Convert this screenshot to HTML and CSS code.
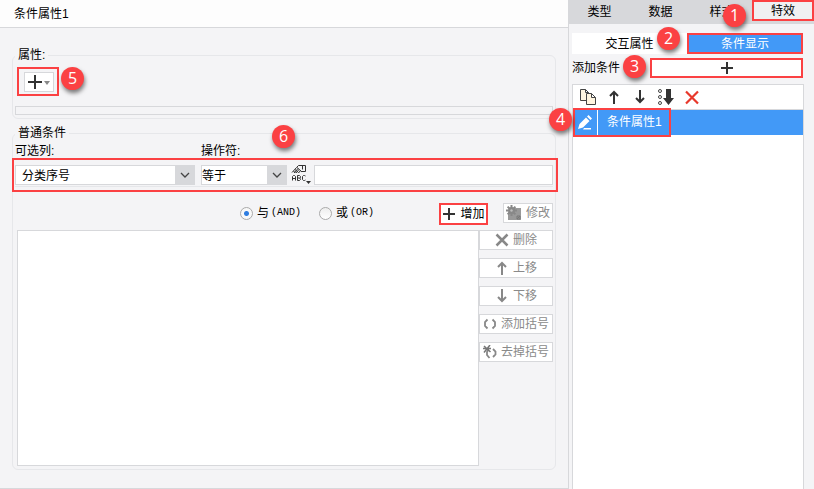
FILE: index.html
```html
<!DOCTYPE html>
<html lang="zh-CN">
<head>
<meta charset="utf-8">
<title>条件属性</title>
<link rel="stylesheet" href="styles.css">
</head>
<body>
<div class="app">
  <section class="editor">
    <header class="editor-header">条件属性1</header>
    <div class="editor-body">
      <fieldset class="group">
        <legend>属性:</legend>
        <div class="attr-actions">
          <div class="mark attr-mark">
            <button class="btn drop-btn" type="button" aria-label="添加属性">
              <svg width="24" height="16" viewBox="0 0 24 16"><path d="M1 7h14v2H1zM7 1h2v14H7z" fill="#333"/><path d="M17 7h6l-3 4z" fill="#888"/></svg>
            </button>
            <span class="badge badge-5">5</span>
          </div>
        </div>
        <div class="attr-bar"></div>
      </fieldset>

      <fieldset class="group group-main">
        <legend>普通条件</legend>
        <div class="labels">
          <label class="label-col" for="column">可选列:</label>
          <label for="operator">操作符:</label>
        </div>
        <div class="filter">
          <div class="select select-col">
            <select id="column"><option>分类序号</option></select>
            <span class="arrow"><svg width="10" height="6" viewBox="0 0 10 6"><path d="M1 1l4 4 4-4" fill="none" stroke="#444" stroke-width="1.3"/></svg></span>
          </div>
          <div class="select select-op">
            <select id="operator"><option>等于</option></select>
            <span class="arrow"><svg width="10" height="6" viewBox="0 0 10 6"><path d="M1 1l4 4 4-4" fill="none" stroke="#444" stroke-width="1.3"/></svg></span>
          </div>
          <button class="icon-btn type-btn" type="button" aria-label="值类型">
            <svg width="20" height="20" viewBox="0 0 20 20" fill="none" stroke="#333">
              <path d="M5.500 2.500l2-2h7v6h-4M11.500.500v4M1 7.500l4.500-5M3 8l4-4.500M5 8l3-3.500M7.500 8l2-2.500M6 2.500l5 4.500M4 4.500l3.500 3M2.500 6l2 2"/>
              <path d="M1.500 15.500v-4l1-1h1l1 1v4M1.500 13.500h3M6.500 10.500h2l1 1v1l-1 .5h-2M8.500 13l1 1v.5l-1 1h-2v-5M14.500 11l-1-.5h-1l-1 1v3l1 1h1l1-.5"/>
              <path d="M15 16h5l-2.500 3z" fill="#333" stroke="none"/>
            </svg>
          </button>
          <input class="value" type="text" aria-label="值">
          <span class="badge badge-6">6</span>
        </div>
        <div class="controls">
          <div class="radios">
            <label class="radio"><input type="radio" name="logic" checked><span>与</span><span class="code">(AND)</span></label>
            <label class="radio"><input type="radio" name="logic"><span>或</span><span class="code">(OR)</span></label>
          </div>
          <div class="mark add-mark">
            <button class="btn add-btn" type="button">
              <svg width="14" height="14" viewBox="0 0 14 14"><path d="M1 6h12v2H1zM6 1h2v12H6z" fill="#333"/></svg>增加
            </button>
          </div>
          <button class="btn edit-btn" type="button" disabled>
            <svg width="16" height="16" viewBox="0 0 16 16"><path d="M8 3h7v12H2V9z" fill="#999"/><path d="M5.500 0v11M0 5.500h11M1.600 1.600l7.800 7.800M9.400 1.600L1.600 9.400" stroke="#888" stroke-width="2"/><circle cx="5.500" cy="5.500" r="3.500" fill="#888"/><circle cx="5.500" cy="5.500" r="1.200" fill="#bbb"/><path d="M11 11h3v3h-3zM11 14l3-3" fill="none" stroke="#777"/></svg>修改
          </button>
        </div>
        <div class="work">
          <div class="expression"></div>
          <div class="side">
            <button class="btn" type="button" disabled><svg width="14" height="14" viewBox="0 0 14 14"><path d="M1.500 1.500L12.500 12.500M12.500 1.500L1.500 12.500" stroke="#888" stroke-width="2.500"/></svg>删除</button>
            <button class="btn" type="button" disabled><svg width="14" height="14" viewBox="0 0 14 14"><path d="M7 14V2M3 6l4-4 4 4" fill="none" stroke="#888" stroke-width="2"/></svg>上移</button>
            <button class="btn" type="button" disabled><svg width="14" height="14" viewBox="0 0 14 14"><path d="M7 0v12M3 8l4 4 4-4" fill="none" stroke="#888" stroke-width="2"/></svg>下移</button>
            <button class="btn" type="button" disabled><svg width="14" height="14" viewBox="0 0 14 14"><path d="M4.500 2.500L2 5v4l2.500 2.500M9.500 2.500L12 5v4l-2.500 2.500" fill="none" stroke="#888" stroke-width="1.800"/></svg>添加括号</button>
            <button class="btn" type="button" disabled><svg width="14" height="14" viewBox="0 0 14 14"><path d="M5.500 4L4 7v3l2.500 3M10 4l2.500 2.500v3L10 12" fill="none" stroke="#888" stroke-width="1.800"/><path d="M0 3.500h8M1 1l6.500 6M7 0L1 7.500" stroke="#777" stroke-width="1.500"/></svg>去掉括号</button>
          </div>
        </div>
      </fieldset>
    </div>
  </section>

  <aside class="panel">
    <nav class="tabs">
      <button class="tab" type="button">类型</button>
      <button class="tab" type="button">数据</button>
      <button class="tab" type="button">样式</button>
      <button class="tab tab-active" type="button">特效</button>
      <span class="badge badge-1">1</span>
    </nav>
    <div class="panel-body">
      <div class="modes">
        <button class="mode" type="button">交互属性</button>
        <button class="mode mode-active mark" type="button">条件显示</button>
        <span class="badge badge-2">2</span>
      </div>
      <div class="add-row">
        <label for="add-condition">添加条件</label>
        <button class="add-condition mark" id="add-condition" type="button" aria-label="添加条件">
          <svg width="14" height="14" viewBox="0 0 14 14"><path d="M1 6h12v2H1zM6 1h2v12H6z" fill="#333"/></svg>
        </button>
        <span class="badge badge-3">3</span>
      </div>
      <div class="conditions">
        <div class="toolbar">
          <button class="icon-btn" type="button" aria-label="复制"><svg width="16" height="16" viewBox="0 0 16 16" fill="#fff5e0" stroke="#444"><path d="M.5.500h5l3 3v8h-8zM5.500.500v3h3"/><path d="M6.500 4.500h5l4 4v7h-9zM11.500 4.500v4h4"/></svg></button>
          <button class="icon-btn" type="button" aria-label="上移"><svg width="16" height="16" viewBox="0 0 16 16"><path d="M8 15V3M4 7l4-4 4 4" fill="none" stroke="#333" stroke-width="2"/></svg></button>
          <button class="icon-btn" type="button" aria-label="下移"><svg width="16" height="16" viewBox="0 0 16 16"><path d="M8 1v12M4 9l4 4 4-4" fill="none" stroke="#333" stroke-width="2"/></svg></button>
          <button class="icon-btn" type="button" aria-label="置底"><svg width="16" height="16" viewBox="0 0 16 16"><g fill="none" stroke="#444"><circle cx="2" cy="2" r="1.500"/><circle cx="2" cy="8" r="1.500"/><circle cx="2" cy="14" r="1.500"/></g><path d="M8 0h5v9h3l-5.500 7L5 9h3z" fill="#333"/></svg></button>
          <button class="icon-btn" type="button" aria-label="删除"><svg width="16" height="16" viewBox="0 0 16 16"><path d="M2 2.500l12 12M14 2.500l-12 12" stroke="#e8382b" stroke-width="2.200"/></svg></button>
        </div>
        <div class="item">
          <span class="item-icon"><svg width="16" height="16" viewBox="0 0 16 16" fill="#fff"><path d="M1 14l1.500-5L9 2.500l3.500 3.500L6 12.500zM10 1.500L11.500 0 15 3.500 13.500 5zM7 13h7v1.500H6z"/></svg></span>
          <span class="item-name">条件属性1</span>
          <span class="item-mark"></span>
          <span class="badge badge-4">4</span>
        </div>
      </div>
    </div>
  </aside>
</div>
</body>
</html>
```
FILE: styles.css
```css
:root {
  --line: #d7d8db;
  --soft-line: #e6e7ea;
  --bg: #f4f4f6;
  --blue: #4299f7;
  --red: #fb4143;
}

* { box-sizing: border-box; }

body {
  margin: 0;
  background: var(--bg);
  color: #000;
  font: 12px/16px "Liberation Sans", "Noto Sans CJK SC", sans-serif;
}

button, input, select {
  font: inherit;
  color: inherit;
  margin: 0;
  border-radius: 0;
}

button { padding: 0; }

svg { display: block; flex: none; }

.app {
  display: flex;
  min-height: 100vh;
}

/* Numbered callouts and highlight frames */
.badge {
  position: absolute;
  z-index: 2;
  width: 23px;
  height: 23px;
  border-radius: 50%;
  background: var(--red);
  color: #fff;
  font: 16px/23px "Open Sans", sans-serif;
  text-align: center;
  box-shadow: 1px 3px 4px rgba(0, 0, 0, 0.5);
}

.badge-1 { left: 154px; top: 4px; }
.badge-2 { left: 85px; top: -6px; }
.badge-3 { left: 51px; top: -3px; }
.badge-4 { left: -24px; top: -2px; }
.badge-5 { left: 42px; top: -2px; }
.badge-6 { left: 257px; top: -33px; }

.mark {
  position: relative;
  border: 2px solid var(--red);
}

/* Left editor */
.editor {
  flex: 1;
  min-width: 0;
  display: flex;
  flex-direction: column;
  border-right: 1px solid var(--line);
  border-bottom: 1px solid var(--line);
}

.editor-header {
  padding: 6px 14px 5px;
  background: #fdfdfd;
  border-bottom: 1px solid var(--line);
}

.editor-body {
  flex: 1;
  display: flex;
  flex-direction: column;
  gap: 6px;
  padding: 19px 12px 18px;
}

.group {
  min-width: 0;
  margin: 0;
  padding: 0 2px 3px;
  border: 1px solid var(--soft-line);
  border-radius: 6px;
}

.group-main {
  flex: 1;
  display: flex;
  flex-direction: column;
}

legend { padding: 1px 3px 0; line-height: 15px; }

.attr-actions {
  display: flex;
  padding: 4px 2px 10px;
}

.attr-mark { padding: 3px 3px 2px 5px; }

.attr-bar {
  height: 9px;
  border: 1px solid var(--line);
}

.btn {
  display: flex;
  align-items: center;
  justify-content: center;
  height: 20px;
  border: 1px solid var(--line);
  background: #fff;
}

.btn:disabled { color: #8a8a8a; }

.drop-btn { width: 30px; height: 20px; }

.labels {
  display: flex;
  padding-top: 3px;
  line-height: 14px;
}

.label-col { width: 186px; }

.filter {
  position: relative;
  display: flex;
  padding: 7px 0 1px;
  border-bottom: 1px solid var(--soft-line);
}

.filter::after {
  content: "";
  position: absolute;
  inset: 0 -5px -6px -3px;
  border: 2px solid var(--red);
  pointer-events: none;
}

.select {
  position: relative;
  height: 20px;
}

.select-col { width: 180px; margin-right: 6px; }
.select-op { width: 86px; margin-right: 4px; }

.select select {
  appearance: none;
  width: 100%;
  height: 100%;
  padding: 1px 20px 0 0;
  border: 1px solid var(--line);
  background: #fff;
}

.select-col select { padding-left: 6px; }

.arrow {
  position: absolute;
  inset: 0 0 0 auto;
  width: 20px;
  display: grid;
  place-items: center;
  background: var(--line);
  pointer-events: none;
}

.icon-btn {
  border: 0;
  background: none;
}

.type-btn { margin-right: 3px; }

.value {
  flex: 1;
  min-width: 0;
  height: 20px;
  border: 1px solid var(--line);
  background: #fff;
}

.controls {
  display: flex;
  justify-content: flex-end;
  align-items: flex-start;
  height: 23px;
  margin: 16px 0 4px;
}

.radios {
  display: flex;
  gap: 18px;
  margin-right: 65px;
}

.radio {
  display: flex;
  align-items: center;
  gap: 2px;
  height: 20px;
}

.radio input {
  appearance: none;
  width: 13px;
  height: 13px;
  margin-right: 2px;
  border: 1px solid #aaa;
  border-radius: 50%;
  background: linear-gradient(#eee, #fff);
}

.radio input:checked {
  background: radial-gradient(circle, #2f7de0 0 2px, #f8f8f8 3px);
}

.code { font: 10px/16px "Liberation Mono", monospace; }

.add-mark {
  width: 49px;
  margin-right: 15px;
}

.add-btn {
  width: 100%;
  height: 18px;
  gap: 4px;
  border: 0;
}

.edit-btn {
  width: 50px;
  gap: 4px;
}

.work {
  flex: 1;
  display: flex;
  padding-left: 2px;
}

.expression {
  flex: 1;
  border: 1px solid var(--line);
  background: #fff;
}

.side {
  width: 74px;
  display: flex;
  flex-direction: column;
  gap: 8px;
}

.side .btn { gap: 4px; }

/* Right panel */
.panel {
  width: 245px;
  display: flex;
  flex-direction: column;
}

.tabs {
  position: relative;
  display: grid;
  grid-template-columns: repeat(3, 1fr) 62px;
  height: 24px;
  background: var(--line);
}

.tab {
  border: 0;
  background: none;
}

.tab-active {
  height: 21px;
  border: 2px solid var(--red);
  background: #f0f0f2;
}

.panel-body {
  flex: 1;
  display: flex;
  flex-direction: column;
  padding: 9px 10px 0 3px;
}

.modes {
  position: relative;
  display: grid;
  grid-template-columns: 115px 1fr;
  height: 21px;
  margin: 0 1px 4px 0;
}

.mode {
  border: 0;
  background: #fff;
}

.mode-active {
  border: 2px solid var(--red);
  background: var(--blue);
  color: #fff;
}

.add-row {
  position: relative;
  display: grid;
  grid-template-columns: 78px 1fr;
  align-items: center;
  height: 20px;
  margin: 0 1px 6px 0;
}

.add-condition {
  display: grid;
  place-items: center;
  height: 20px;
  background: #fff;
}

.conditions {
  flex: 1;
  border: 1px solid var(--line);
  border-bottom: 0;
  background: #fff;
}

.toolbar {
  display: flex;
  gap: 10px;
  padding: 4px 7px;
  border-bottom: 1px solid var(--line);
}

.item {
  position: relative;
  display: flex;
  height: 25px;
  background: var(--blue);
  color: #fff;
}

.item-icon {
  display: grid;
  place-items: center;
  width: 25px;
  border-right: 1px solid #fff;
}

.item-name {
  padding-left: 9px;
  line-height: 25px;
}

.item-mark {
  position: absolute;
  left: 0;
  top: -2px;
  width: 98px;
  height: 29px;
  border: 2px solid var(--red);
}
```
